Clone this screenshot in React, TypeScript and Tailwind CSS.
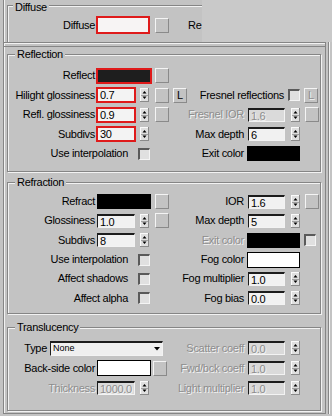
import React from "react";

const etched = "border border-[#858585] shadow-[inset_1px_1px_0_#f2f2f2,1px_1px_0_#f2f2f2]";
const sunken =
  "border-t-2 border-l border-b border-r border-t-[#1c1c1c] border-l-[#1c1c1c] border-b-[#f3f3f3] border-r-[#f3f3f3]";
const dimText = "text-[#8d8d8d] [text-shadow:1px_1px_0_#f3f3f3]";

function Lbl({ t, w, dis }: { t: string; w: string; dis?: boolean }) {
  return (
    <span className={`${w} shrink-0 text-right whitespace-nowrap ${dis ? dimText : "text-black"}`}>
      {t}
    </span>
  );
}

function Field({ v, red, dis, ml = "ml-[2px]", w = "w-[38px]" }: { v: string; red?: boolean; dis?: boolean; ml?: string; w?: string }) {
  if (red) {
    return (
      <div className="ml-[1px] w-[40px] h-[16px] shrink-0 border-2 border-[#df1a1a] bg-[#f3f3f3] pl-[2px] leading-[12px]">
        {v}
      </div>
    );
  }
  return (
    <div className={`${ml} ${w} h-[14px] shrink-0 ${sunken} pl-[2px] leading-[12px] ${dis ? `bg-[#dadada] ${dimText}` : "bg-[#f1f1f1]"}`}>
      {v}
    </div>
  );
}

function Spin({ ml }: { ml: string }) {
  return (
    <svg className={`${ml} shrink-0`} width="9" height="14" viewBox="0 0 9 14">
      <rect x="0" y="0" width="9" height="14" fill="#dfdfdf" />
      <rect x="0" y="0" width="9" height="1" fill="#fafafa" />
      <rect x="0" y="0" width="1" height="14" fill="#fafafa" />
      <rect x="8" y="0" width="1" height="14" fill="#8a8a8a" />
      <rect x="0" y="13" width="9" height="1" fill="#8a8a8a" />
      <rect x="1" y="7" width="7" height="1" fill="#a0a0a0" />
      <path d="M2.5 5.5L4.5 3L6.5 5.5Z" fill="#000" />
      <path d="M2.5 8.5L6.5 8.5L4.5 11Z" fill="#000" />
    </svg>
  );
}

function Check({ ml }: { ml: string }) {
  return (
    <div
      className={`${ml} w-[12px] h-[12px] shrink-0 border-t-2 border-l-2 border-t-[#5a5a5a] border-l-[#5a5a5a] border-b border-r border-b-[#f4f4f4] border-r-[#f4f4f4] bg-[#e0e0e0]`}
    />
  );
}

function Btn({ ml, t, dis }: { ml: string; t?: string; dis?: boolean }) {
  return (
    <div
      className={`${ml} w-[14px] h-[15px] shrink-0 border border-t-[#f4f4f4] border-l-[#f4f4f4] border-b-[#8a8a8a] border-r-[#8a8a8a] flex items-center justify-center leading-none ${dis ? dimText : ""}`}
    >
      {t}
    </div>
  );
}

function Group({ title, className, children }: { title: string; className: string; children: React.ReactNode }) {
  return (
    <div className={`relative ml-[3px] w-[314px] ${etched} ${className}`}>
      <span className="absolute left-[7px] top-[-8px] bg-[#c3c3c3] px-[2px] leading-[14px]">{title}</span>
      {children}
    </div>
  );
}

function Row({ h, left, right }: { h: string; left?: React.ReactNode; right?: React.ReactNode }) {
  return (
    <div className={`flex items-center ${h}`}>
      <div className="flex items-center w-[165px]">{left}</div>
      <div className="flex items-center w-[147px]">{right}</div>
    </div>
  );
}

export default function App() {
  const r1 = "h-[19.5px]";
  const r2 = "h-[19.3px]";
  const r3 = "h-[20px]";

  return (
    <div className="w-[332px] h-[416px] overflow-hidden bg-[#c3c3c3] font-['Liberation_Sans',Arial,sans-serif] text-[11px] tracking-[-0.3px] leading-[13px] text-black">
      {/* Diffuse strip, cut off on the right */}
      <div className="flex h-[42px]">
        <div className="w-[202px] h-full overflow-hidden pl-[3px]">
          <div className="h-full border-l border-[#858585] shadow-[inset_1px_0_0_#f2f2f2] pl-[3px] pt-[5px]">
            <div className="relative w-[320px] h-[40px] border-l border-t border-[#858585] shadow-[inset_1px_1px_0_#f2f2f2]">
              <span className="absolute left-[5px] top-[-6px] bg-[#c3c3c3] px-[2px] leading-[14px]">Diffuse</span>
              <div className="flex items-center h-[20px] mt-[9px]">
                <Lbl t="Diffuse" w="w-[87px]" />
                <div className="ml-[1px] w-[54px] h-[18px] shrink-0 border-2 border-[#df1a1a] bg-[#f7f4f4]" />
                <Btn ml="ml-[5px]" />
                <span className="ml-[19px] whitespace-nowrap">Re</span>
              </div>
            </div>
          </div>
        </div>
        <div className="flex-1 bg-[#c9c9c9]" />
      </div>

      <div className="flex">
        <div className="ml-[3px] w-[323px] h-[372px] border border-[#858585] shadow-[inset_1px_1px_0_#f2f2f2]">
          <div className="h-[4px] border-b border-[#858585]" />

          <Group title="Reflection" className="mt-[7px] h-[118px] pt-[11px]">
            <Row
              h={r1}
              left={
                <>
                  <Lbl t="Reflect" w="w-[87px]" />
                  <div className="ml-[1px] w-[56px] h-[16px] shrink-0 border-2 border-[#df1a1a] bg-[#1e1e1e]" />
                  <Btn ml="ml-[3px]" />
                </>
              }
            />
            <Row
              h={r1}
              left={
                <>
                  <Lbl t="Hilight glossiness" w="w-[87px]" />
                  <Field v="0.7" red />
                  <Spin ml="ml-[4px]" />
                  <Btn ml="ml-[6px]" />
                </>
              }
              right={
                <>
                  <Btn ml="ml-0" t="L" />
                  <span className="w-[97px] shrink-0 text-right whitespace-nowrap">Fresnel reflections</span>
                  <Check ml="ml-[4px]" />
                  <Btn ml="ml-[4px]" t="L" dis />
                </>
              }
            />
            <Row
              h={r1}
              left={
                <>
                  <Lbl t="Refl. glossiness" w="w-[87px]" />
                  <Field v="0.9" red />
                  <Spin ml="ml-[4px]" />
                  <Btn ml="ml-[6px]" />
                </>
              }
              right={
                <>
                  <Lbl t="Fresnel IOR" w="w-[71px]" dis />
                  <Field v="1.6" dis ml="ml-[4px]" w="w-[37px]" />
                  <Spin ml="ml-[6px]" />
                  <Btn ml="ml-[5px]" />
                </>
              }
            />
            <Row
              h={r1}
              left={
                <>
                  <Lbl t="Subdivs" w="w-[87px]" />
                  <Field v="30" red />
                  <Spin ml="ml-[4px]" />
                </>
              }
              right={
                <>
                  <Lbl t="Max depth" w="w-[71px]" />
                  <Field v="6" ml="ml-[4px]" w="w-[37px]" />
                  <Spin ml="ml-[6px]" />
                </>
              }
            />
            <Row
              h={r1}
              left={
                <>
                  <Lbl t="Use interpolation" w="w-[120px]" />
                  <Check ml="ml-[10px]" />
                </>
              }
              right={
                <>
                  <Lbl t="Exit color" w="w-[71px]" />
                  <div className="ml-[3px] w-[53px] h-[15px] shrink-0 bg-black" />
                </>
              }
            />
          </Group>

          <Group title="Refraction" className="mt-[10px] h-[132px] pt-[9px]">
            <Row
              h={r2}
              left={
                <>
                  <Lbl t="Refract" w="w-[87px]" />
                  <div className="ml-[2px] w-[54px] h-[15px] shrink-0 bg-black" />
                  <Btn ml="ml-[4px]" />
                </>
              }
              right={
                <>
                  <Lbl t="IOR" w="w-[71px]" />
                  <Field v="1.6" ml="ml-[4px]" w="w-[37px]" />
                  <Spin ml="ml-[6px]" />
                  <Btn ml="ml-[5px]" />
                </>
              }
            />
            <Row
              h={r2}
              left={
                <>
                  <Lbl t="Glossiness" w="w-[87px]" />
                  <Field v="1.0" />
                  <Spin ml="ml-[5px]" />
                  <Btn ml="ml-[6px]" />
                </>
              }
              right={
                <>
                  <Lbl t="Max depth" w="w-[71px]" />
                  <Field v="5" ml="ml-[4px]" w="w-[37px]" />
                  <Spin ml="ml-[6px]" />
                </>
              }
            />
            <Row
              h={r2}
              left={
                <>
                  <Lbl t="Subdivs" w="w-[87px]" />
                  <Field v="8" />
                  <Spin ml="ml-[5px]" />
                </>
              }
              right={
                <>
                  <Lbl t="Exit color" w="w-[71px]" dis />
                  <div className="ml-[3px] w-[53px] h-[15px] shrink-0 bg-black" />
                  <Check ml="ml-[4px]" />
                </>
              }
            />
            <Row
              h={r2}
              left={
                <>
                  <Lbl t="Use interpolation" w="w-[120px]" />
                  <Check ml="ml-[10px]" />
                </>
              }
              right={
                <>
                  <Lbl t="Fog color" w="w-[71px]" />
                  <div className="ml-[3px] w-[53px] h-[16px] shrink-0 border border-black bg-white" />
                </>
              }
            />
            <Row
              h={r2}
              left={
                <>
                  <Lbl t="Affect shadows" w="w-[120px]" />
                  <Check ml="ml-[10px]" />
                </>
              }
              right={
                <>
                  <Lbl t="Fog multiplier" w="w-[71px]" />
                  <Field v="1.0" ml="ml-[4px]" w="w-[37px]" />
                  <Spin ml="ml-[6px]" />
                </>
              }
            />
            <Row
              h={r2}
              left={
                <>
                  <Lbl t="Affect alpha" w="w-[120px]" />
                  <Check ml="ml-[10px]" />
                </>
              }
              right={
                <>
                  <Lbl t="Fog bias" w="w-[71px]" />
                  <Field v="0.0" ml="ml-[4px]" w="w-[37px]" />
                  <Spin ml="ml-[6px]" />
                </>
              }
            />
          </Group>

          <Group title="Translucency" className="mt-[13px] h-[84px] pt-[10px]">
            <Row
              h={r3}
              left={
                <>
                  <Lbl t="Type" w="w-[39px]" />
                  <div className={`ml-[3px] w-[113px] h-[15px] shrink-0 flex items-center ${sunken} bg-[#efefef]`}>
                    <span className="flex-1 pl-[2px] text-[9px] tracking-normal leading-none">None</span>
                    <div className="w-[11px] h-full flex items-center justify-center">
                      <svg width="6" height="4" viewBox="0 0 6 4">
                        <path d="M0 0H6L3 3.5Z" fill="#000" />
                      </svg>
                    </div>
                  </div>
                </>
              }
              right={
                <>
                  <Lbl t="Scatter coeff" w="w-[71px]" dis />
                  <Field v="0.0" dis ml="ml-[4px]" w="w-[37px]" />
                  <Spin ml="ml-[6px]" />
                </>
              }
            />
            <Row
              h={r3}
              left={
                <>
                  <Lbl t="Back-side color" w="w-[87px]" />
                  <div className="ml-[2px] w-[54px] h-[16px] shrink-0 border border-black bg-white" />
                  <Btn ml="ml-[2px]" />
                </>
              }
              right={
                <>
                  <Lbl t="Fwd/bck coeff" w="w-[71px]" dis />
                  <Field v="1.0" dis ml="ml-[4px]" w="w-[37px]" />
                  <Spin ml="ml-[6px]" />
                </>
              }
            />
            <Row
              h={r3}
              left={
                <>
                  <Lbl t="Thickness" w="w-[87px]" dis />
                  <Field v="1000.0" dis />
                  <Spin ml="ml-[5px]" />
                </>
              }
              right={
                <>
                  <Lbl t="Light multiplier" w="w-[71px]" dis />
                  <Field v="1.0" dis ml="ml-[4px]" w="w-[37px]" />
                  <Spin ml="ml-[6px]" />
                </>
              }
            />
          </Group>
        </div>
        <div className="ml-[2px] w-[1px] h-[372px] bg-[#858585] shadow-[1px_0_0_#f2f2f2]" />
      </div>
    </div>
  );
}
